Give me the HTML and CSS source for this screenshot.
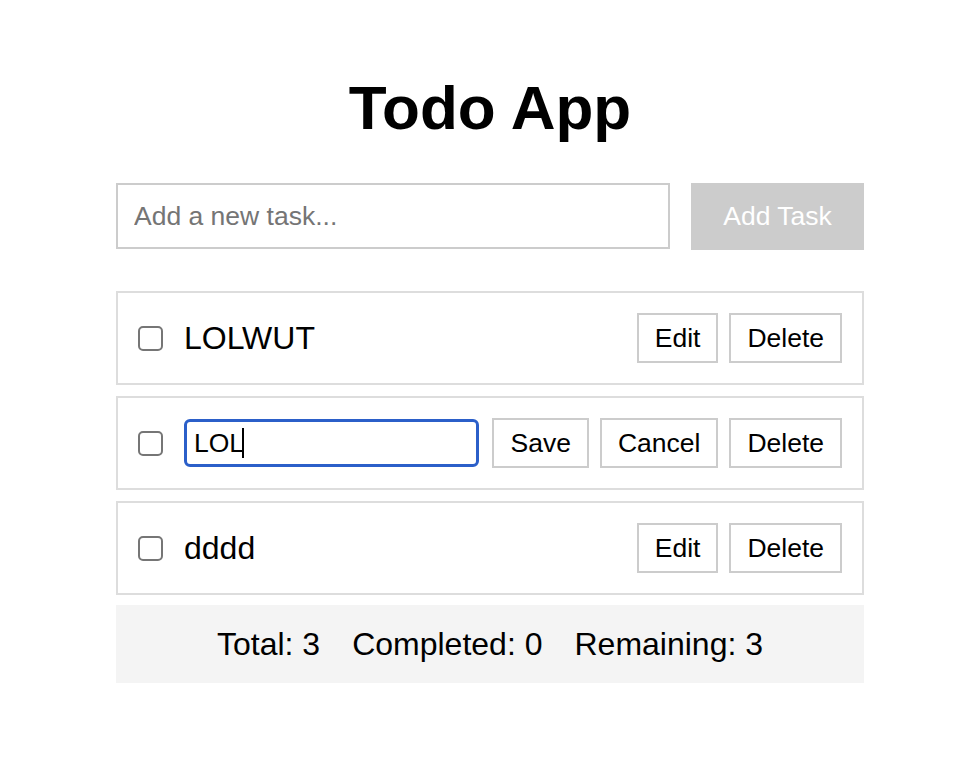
FILE: index.html
```html
<!DOCTYPE html>
<html lang="en">
<head>
<meta charset="utf-8">
<title>Todo App</title>
<link rel="stylesheet" href="styles.css">
</head>
<body>
<div class="app">
  <h1 class="title">Todo App</h1>
  <div class="add-row">
    <input class="add-input" type="text" placeholder="Add a new task...">
    <button class="add-btn">Add Task</button>
  </div>
  <ul class="tasks">
    <li class="task">
      <input class="check" type="checkbox">
      <span class="task-text">LOLWUT</span>
      <div class="actions">
        <button class="btn">Edit</button>
        <button class="btn">Delete</button>
      </div>
    </li>
    <li class="task">
      <input class="check" type="checkbox">
      <div class="edit-field">LOL<span class="caret"></span></div>
      <div class="actions">
        <button class="btn">Save</button>
        <button class="btn">Cancel</button>
        <button class="btn">Delete</button>
      </div>
    </li>
    <li class="task">
      <input class="check" type="checkbox">
      <span class="task-text">dddd</span>
      <div class="actions">
        <button class="btn">Edit</button>
        <button class="btn">Delete</button>
      </div>
    </li>
  </ul>
  <div class="stats">
    <span>Total: 3</span>
    <span>Completed: 0</span>
    <span>Remaining: 3</span>
  </div>
</div>
</body>
</html>
```

FILE: styles.css
```css
* { box-sizing: border-box; }
html, body { margin: 0; padding: 0; background: #fff; }
body {
  font-family: "Liberation Sans", Arial, Helvetica, sans-serif;
  color: #000;
}
.app {
  width: 748px;
  margin-left: 116px;
  padding-top: 72px;
}
.title {
  margin: 0;
  font-size: 62px;
  line-height: 72px;
  font-weight: 700;
  text-align: center;
}
.add-row {
  display: flex;
  gap: 21px;
  margin-top: 39px;
  height: 67px;
}
.add-input {
  flex: 1;
  height: 66px;
  border: 2px solid #ccc;
  padding: 0 16px;
  font-family: inherit;
  font-size: 26.5px;
  color: #000;
  outline: none;
}
.add-input::placeholder { color: #757575; }
.add-btn {
  width: 173px;
  height: 67px;
  border: none;
  background: #ccc;
  color: #fff;
  font-family: inherit;
  font-size: 26.5px;
}
.tasks {
  list-style: none;
  margin: 41px 0 0;
  padding: 0;
  display: flex;
  flex-direction: column;
  gap: 11px;
}
.task {
  display: flex;
  align-items: center;
  height: 94px;
  border: 2px solid #ddd;
  padding: 0 20px;
  gap: 21px;
}
.check {
  appearance: none;
  -webkit-appearance: none;
  margin: 0;
  width: 25px;
  height: 25px;
  border: 2px solid #767676;
  border-radius: 5px;
  background: #fff;
  flex: none;
}
.task-text {
  flex: 1;
  font-size: 32px;
}
.edit-field {
  flex: 1;
  height: 48px;
  border: 3px solid #2b5fc9;
  border-radius: 6px;
  padding: 0 7px;
  display: flex;
  align-items: center;
  font-size: 26.5px;
  margin-right: -8px;
}
.caret {
  display: inline-block;
  width: 2px;
  height: 30px;
  background: #000;
  margin-left: -2px;
}
.actions {
  display: flex;
  gap: 11px;
}
.btn {
  height: 50px;
  padding: 0 16px;
  border: 2px solid #ccc;
  background: #fff;
  color: #000;
  font-family: inherit;
  font-size: 26.5px;
}
.stats {
  margin-top: 10px;
  height: 78px;
  background: #f4f4f4;
  display: flex;
  justify-content: center;
  align-items: center;
  gap: 32px;
  font-size: 32px;
}
```
